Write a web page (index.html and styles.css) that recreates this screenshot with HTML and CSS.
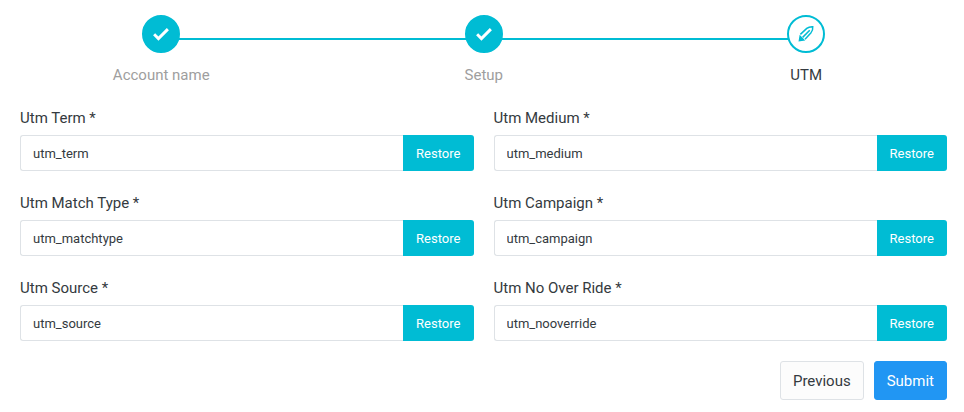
FILE: index.html
```html
<!DOCTYPE html>
<html lang="en">
<head>
  <meta charset="UTF-8" />
  <title>UTM</title>
  <link rel="stylesheet" href="styles.css">
</head>

<body>
  <!-- Stepper -->
  <div class="steps">
    <div class="step done">
      <span class="step-icon">
        <svg viewBox="0 0 24 24"><path d="M4.500 12.300l4.700 4.700L19.500 6.700" /></svg>
      </span>
      <span class="step-name">Account name</span>
    </div>
    <div class="step done">
      <span class="step-icon">
        <svg viewBox="0 0 24 24"><path d="M4.500 12.300l4.700 4.700L19.500 6.700" /></svg>
      </span>
      <span class="step-name">Setup</span>
    </div>
    <div class="step current">
      <span class="step-icon">
        <svg viewBox="0 0 24 24">
          <path class="tip" d="M2 22l1.500-9 7.500 7.500z" />
          <path d="M4.500 12.500l8.500-8c2.300-1.800 5-2.500 8-2.300.3 3-.5 5.800-2.300 8l-8 8.800" />
          <path d="M7.500 16.500l9.500-9.500" />
        </svg>
      </span>
      <span class="step-name">UTM</span>
    </div>
  </div>

  <!-- Fields -->
  <form class="fields">
    <div class="field">
      <label>Utm Term *</label>
      <div class="input-group">
        <input type="text" value="utm_term">
        <button type="button" class="restore">Restore</button>
      </div>
    </div>
    <div class="field">
      <label>Utm Medium *</label>
      <div class="input-group">
        <input type="text" value="utm_medium">
        <button type="button" class="restore">Restore</button>
      </div>
    </div>
    <div class="field">
      <label>Utm Match Type *</label>
      <div class="input-group">
        <input type="text" value="utm_matchtype">
        <button type="button" class="restore">Restore</button>
      </div>
    </div>
    <div class="field">
      <label>Utm Campaign *</label>
      <div class="input-group">
        <input type="text" value="utm_campaign">
        <button type="button" class="restore">Restore</button>
      </div>
    </div>
    <div class="field">
      <label>Utm Source *</label>
      <div class="input-group">
        <input type="text" value="utm_source">
        <button type="button" class="restore">Restore</button>
      </div>
    </div>
    <div class="field">
      <label>Utm No Over Ride *</label>
      <div class="input-group">
        <input type="text" value="utm_nooverride">
        <button type="button" class="restore">Restore</button>
      </div>
    </div>
  </form>

  <div class="actions">
    <button type="button" class="button previous">Previous</button>
    <button type="button" class="button submit">Submit</button>
  </div>
</body>
</html>
```

FILE: styles.css
```css
html, body {
  overflow: hidden;
}

body {
  font-family: 'Roboto', sans-serif;
  margin: 0;
  padding: 15px 17px 0 20px;
  background-color: #ffffff;
  color: #343a40;
  height: 412px;
  box-sizing: border-box;
}

.steps {
  display: grid;
  grid-template-columns: repeat(3, 322.5px);
  margin: 0 -20.5px 0 -20px;
}

.step {
  position: relative;
  display: flex;
  flex-direction: column;
  align-items: center;
}

/* line joining a step to the one before it */
.step + .step::before {
  content: "";
  position: absolute;
  top: 23px;
  right: 50%;
  width: 100%;
  height: 2px;
  background: #00bcd4;
}

.step-icon {
  position: relative;
  z-index: 1;
  width: 38px;
  height: 38px;
  box-sizing: border-box;
  border-radius: 50%;
  border: 2px solid #00bcd4;
  background: #00bcd4;
  display: flex;
  align-items: center;
  justify-content: center;
}

.step-icon svg {
  width: 22px;
  height: 22px;
  fill: none;
  stroke: #ffffff;
  stroke-width: 3.2;
}

.current .step-icon {
  background: #ffffff;
}

.current .step-icon svg {
  width: 18px;
  height: 18px;
  stroke: #00bcd4;
  stroke-width: 2;
}

.current .step-icon .tip {
  fill: #00bcd4;
  stroke: none;
}

.step-name {
  margin-top: 13px;
  font-size: 15px;
  line-height: 18px;
  color: #9e9e9e;
}

.current .step-name {
  color: #343a40;
}

.fields {
  display: grid;
  grid-template-columns: 1fr 1fr;
  column-gap: 20px;
  row-gap: 21px;
  margin-top: 23px;
}

.field label {
  display: block;
  font-size: 15px;
  line-height: 22px;
  margin-bottom: 6px;
}

.input-group {
  display: flex;
  height: 36px;
}

.input-group input {
  flex: 1;
  min-width: 0;
  box-sizing: border-box;
  padding: 0 12px;
  border: 1px solid #dee2e6;
  border-right: none;
  border-radius: 3px 0 0 3px;
  font-family: inherit;
  font-size: 13px;
  color: #343a40;
  outline: none;
}

.restore {
  width: 70.5px;
  border: none;
  border-radius: 0 3px 3px 0;
  background: #00bcd4;
  color: #ffffff;
  font-family: inherit;
  font-size: 13px;
  padding: 0;
}

.actions {
  display: flex;
  justify-content: flex-end;
  gap: 10px;
  margin-top: 20px;
}

.button {
  height: 39px;
  box-sizing: border-box;
  border-radius: 3px;
  font-family: inherit;
  font-size: 15px;
  padding: 0 12px;
}

.previous {
  background: #fcfcfc;
  border: 1px solid #dee2e6;
  color: #343a40;
}

.submit {
  background: #2196f3;
  border: 1px solid #2196f3;
  color: #ffffff;
}
```
